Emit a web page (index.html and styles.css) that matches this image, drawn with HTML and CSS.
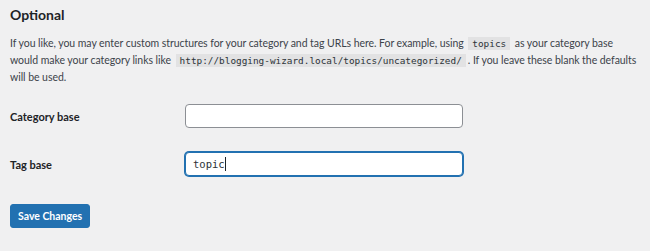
FILE: index.html
```html
<!DOCTYPE html>
<html lang="en">

<head>
    <meta charset="UTF-8">
    <meta name="viewport" content="width=device-width, initial-scale=1.0">
    <title>Permalink Settings</title>
    <link rel="stylesheet" href="styles.css">
</head>

<body>

    <div class="wrap">
        <h2 class="title">Optional</h2>
        <p class="intro">
            If you like, you may enter custom structures for your category and tag URLs here. For example, using
            <code>topics</code> as your category base<br>
            would make your category links like
            <code>http://blogging-wizard.local/topics/uncategorized/</code>. If you leave these blank the defaults
            will be used.
        </p>

        <div class="form-table">
            <div class="form-row">
                <label class="form-label" for="category_base">Category base</label>
                <input class="regular-text" type="text" id="category_base" value="">
            </div>
            <div class="form-row">
                <label class="form-label" for="tag_base">Tag base</label>
                <div class="regular-text is-focused">topic<span class="caret"></span></div>
            </div>
        </div>

        <div class="submit">
            <button class="button-primary">Save Changes</button>
        </div>
    </div>

</body>

</html>
```

FILE: styles.css
```css
* {
    margin: 0;
    padding: 0;
    box-sizing: border-box;
}

body {
    background: #f0f0f1;
    color: #3c434a;
    font-family: 'Lato', sans-serif;
    font-size: 10.5px;
}

.wrap {
    padding: 5px 10px 0;
}

.title {
    font-size: 14px;
    font-weight: 700;
    color: #1d2327;
    line-height: 20px;
}

.intro {
    margin-top: 10px;
    line-height: 17px;
    letter-spacing: -0.05px;
}

code {
    font-family: 'DejaVu Sans Mono', monospace;
    font-size: 9.4px;
    letter-spacing: 0;
    background: #e2e2e3;
    color: #2c3338;
    padding: 1px 4px;
    margin: 0 2px;
}

.form-table {
    margin-top: 18px;
    display: flex;
    flex-direction: column;
    gap: 24px;
}

.form-row {
    display: flex;
    align-items: center;
}

.form-label {
    width: 175px;
    font-size: 11px;
    font-weight: 700;
    color: #1d2327;
}

.regular-text {
    width: 278px;
    height: 24px;
    background: #fff;
    border: 1px solid #8c8f94;
    border-radius: 4px;
    font-family: 'DejaVu Sans Mono', monospace;
    font-size: 10.5px;
    color: #2c3338;
    padding: 0 7px;
    display: flex;
    align-items: center;
}

.is-focused {
    border-color: #2271b1;
    box-shadow: 0 0 0 1px #2271b1;
}

.caret {
    width: 1px;
    height: 14px;
    background: #1d2327;
}

.submit {
    margin-top: 28px;
}

.button-primary {
    background: #2271b1;
    border: 1px solid #2271b1;
    color: #fff;
    border-radius: 3px;
    font-family: 'Lato', sans-serif;
    font-size: 10.5px;
    font-weight: 700;
    height: 24px;
    padding: 0 7px;
    cursor: pointer;
}
```
